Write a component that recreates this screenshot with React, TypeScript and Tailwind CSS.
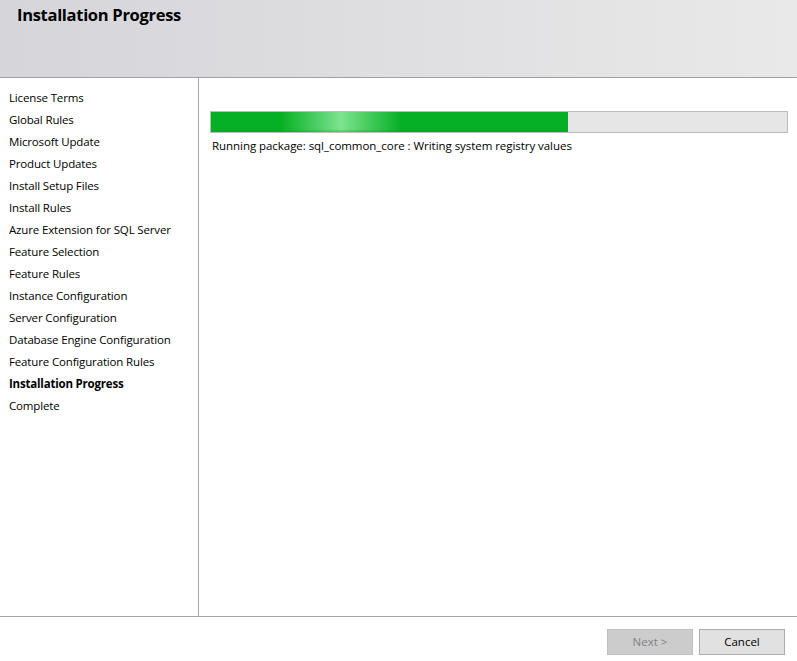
const steps = [
  "License Terms",
  "Global Rules",
  "Microsoft Update",
  "Product Updates",
  "Install Setup Files",
  "Install Rules",
  "Azure Extension for SQL Server",
  "Feature Selection",
  "Feature Rules",
  "Instance Configuration",
  "Server Configuration",
  "Database Engine Configuration",
  "Feature Configuration Rules",
  "Installation Progress",
  "Complete",
];

const current = "Installation Progress";

export default function App() {
  return (
    <div
      className="flex h-[661px] w-[797px] flex-col overflow-hidden bg-white text-[12px] text-black"
      style={{ fontFamily: '"Open Sans", "Noto Sans", sans-serif' }}
    >
      {/* header band */}
      <header className="h-[78px] shrink-0 border-b border-[#a0a0a0] bg-gradient-to-r from-[#d5d5da] to-[#e9e9e9] pl-[17px] pt-[4px]">
        <h1 className="text-[16.5px] font-bold leading-[22px] tracking-[-0.3px]">Installation Progress</h1>
      </header>

      <div className="flex min-h-0 flex-1">
        <nav className="w-[199px] shrink-0 border-r border-[#a5a5ad] pl-[9px] pt-[9px]">
          {steps.map((step) => (
            <div
              key={step}
              className={
                step === current
                  ? "h-[22px] text-[11.5px] font-bold leading-[22px] tracking-[-0.2px]"
                  : "h-[22px] text-[11.5px] leading-[22px] tracking-[-0.15px]"
              }
            >
              {step}
            </div>
          ))}
        </nav>

        <main className="flex-1 pl-[11px] pr-[9px] pt-[33px]">
          <div className="relative h-[22px] w-full overflow-hidden border border-[#bcbcbc] bg-[#e6e6e6]">
            <div className="relative h-full w-[357px] bg-[#06b025]">
              <div className="absolute inset-y-0 left-[70px] w-[120px] bg-gradient-to-r from-transparent via-[#8be99a] to-transparent opacity-90" />
              <div className="absolute inset-x-0 bottom-0 h-[3px] bg-gradient-to-b from-transparent to-[#0a9b22] opacity-40" />
            </div>
          </div>
          <p className="mt-[5px] pl-[2px] text-[11.5px] leading-[16px] tracking-[-0.05px]">
            Running package: sql_common_core : Writing system registry values
          </p>
        </main>
      </div>

      <footer className="flex h-[45px] shrink-0 items-start justify-end gap-[6px] border-t border-[#a5a5ad] pr-[12px] pt-[12px]">
        <button
          disabled
          className="h-[26px] w-[86px] border border-[#bfbfbf] bg-[#cccccc] text-[11.5px] text-[#838383]"
        >
          Next &gt;
        </button>
        <button className="h-[26px] w-[86px] border border-[#adadad] bg-[#e1e1e1] text-[11.5px] text-black">
          Cancel
        </button>
      </footer>
    </div>
  );
}
